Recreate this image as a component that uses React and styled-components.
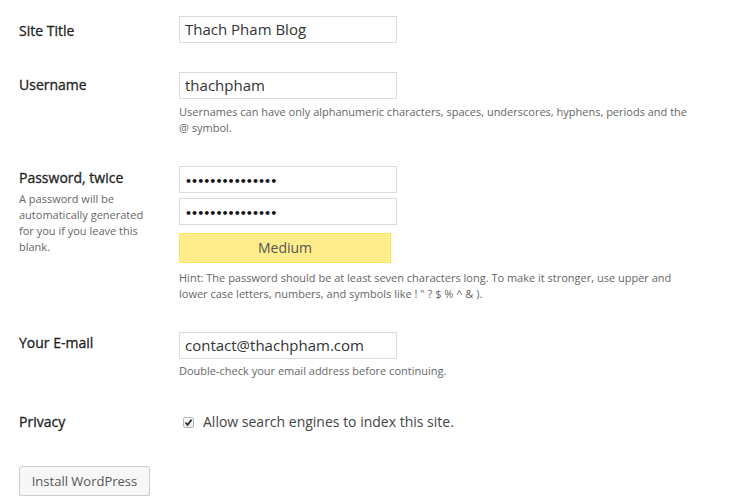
import React from 'react'
import styled, { createGlobalStyle } from 'styled-components'

const GlobalStyle = createGlobalStyle`
  html, body {
    margin: 0;
    padding: 0;
    background: #fff;
  }
  body {
    font-family: 'Open Sans', 'Liberation Sans', sans-serif;
    color: #333;
  }
`

const Page = styled.div`
  padding: 16px 0 0 19px;
  width: 721px;
`

const Row = styled.div`
  display: grid;
  grid-template-columns: 160px 1fr;
  margin-bottom: ${(p) => p.gap || 0}px;
`

const Label = styled.div`
  font-size: 14px;
  font-weight: 400;
  line-height: 20px;
  color: #222;
  -webkit-text-stroke: 0.3px #222;
  padding-top: ${(p) => p.offset || 0}px;
`

const LabelNote = styled.div`
  font-size: 11px;
  font-weight: 400;
  line-height: 16px;
  color: #666;
  -webkit-text-stroke: 0;
  margin-top: 3px;
  width: 130px;
`

const Field = styled.div`
  display: flex;
  flex-direction: column;
  align-items: flex-start;
`

const Input = styled.div`
  box-sizing: border-box;
  width: 218px;
  height: 27px;
  border: 1px solid #dcdcdc;
  background: #fff;
  padding: 0 5px;
  font-size: 15px;
  line-height: 25px;
  color: #333;
  margin-bottom: ${(p) => p.after || 0}px;
`

const Dots = styled.span`
  font-size: 11px;
  letter-spacing: -0.95px;
  color: #111;
  font-family: 'DejaVu Sans', sans-serif;
  font-weight: 700;
`

const Strength = styled.div`
  box-sizing: border-box;
  width: 212px;
  height: 30px;
  background: #ffec8b;
  border: 1px solid #ffdf5b;
  text-align: center;
  font-size: 14px;
  line-height: 28px;
  color: #555;
`

const Note = styled.p`
  margin: ${(p) => p.top || 4}px 0 0;
  font-size: 11px;
  line-height: 16px;
  color: #666;
  width: ${(p) => p.width || 520}px;
`

const Check = styled.label`
  display: flex;
  align-items: center;
  gap: 9px;
  font-size: 14px;
  color: #444;
  padding: 0 0 0 4px;
  line-height: 20px;
`

const Box = styled.span`
  box-sizing: border-box;
  width: 11px;
  height: 11px;
  border: 1px solid #b4b4b4;
  border-radius: 2px;
  background: linear-gradient(#fff, #e9e9e9);
  display: flex;
  align-items: center;
  justify-content: center;
`

const Button = styled.button`
  box-sizing: border-box;
  width: 131px;
  height: 30px;
  border: 1px solid #cccccc;
  border-radius: 3px;
  background: #f7f7f7;
  box-shadow: 0 1px 0 #e0e0e0;
  font-family: 'Open Sans', 'Liberation Sans', sans-serif;
  font-size: 13px;
  color: #555;
  padding: 0;
  cursor: pointer;
`

const dots = '•••••••••••••••'

const App = () => {
  return (
    <Page>
      <GlobalStyle />
      <Row gap={29}>
        <Label offset={5}>Site Title</Label>
        <Field>
          <Input>Thach Pham Blog</Input>
        </Field>
      </Row>
      <Row gap={30}>
        <Label offset={3}>Username</Label>
        <Field>
          <Input>thachpham</Input>
          <Note top={5}>
            Usernames can have only alphanumeric characters, spaces, underscores, hyphens, periods and
            the @ symbol.
          </Note>
        </Field>
      </Row>
      <Row gap={30}>
        <Label offset={2}>
          Password, twice
          <LabelNote>A password will be automatically generated for you if you leave this blank.</LabelNote>
        </Label>
        <Field>
          <Input after={5}>
            <Dots>{dots}</Dots>
          </Input>
          <Input after={8}>
            <Dots>{dots}</Dots>
          </Input>
          <Strength>Medium</Strength>
          <Note top={7} width={500}>
            Hint: The password should be at least seven characters long. To make it stronger, use upper
            and lower case letters, numbers, and symbols like ! " ? $ % ^ &amp; ).
          </Note>
        </Field>
      </Row>
      <Row gap={33}>
        <Label offset={1}>Your E-mail</Label>
        <Field>
          <Input>contact@thachpham.com</Input>
          <Note top={4}>Double-check your email address before continuing.</Note>
        </Field>
      </Row>
      <Row gap={34}>
        <Label offset={0}>Privacy</Label>
        <Field>
          <Check>
            <Box>
              <svg width="9" height="9" viewBox="0 0 9 9">
                <path d="M1.5 4.5 L3.6 6.8 L7.6 1.6" fill="none" stroke="#333" strokeWidth="1.8" />
              </svg>
            </Box>
            Allow search engines to index this site.
          </Check>
        </Field>
      </Row>
      <Button>Install WordPress</Button>
    </Page>
  )
}

export default App
